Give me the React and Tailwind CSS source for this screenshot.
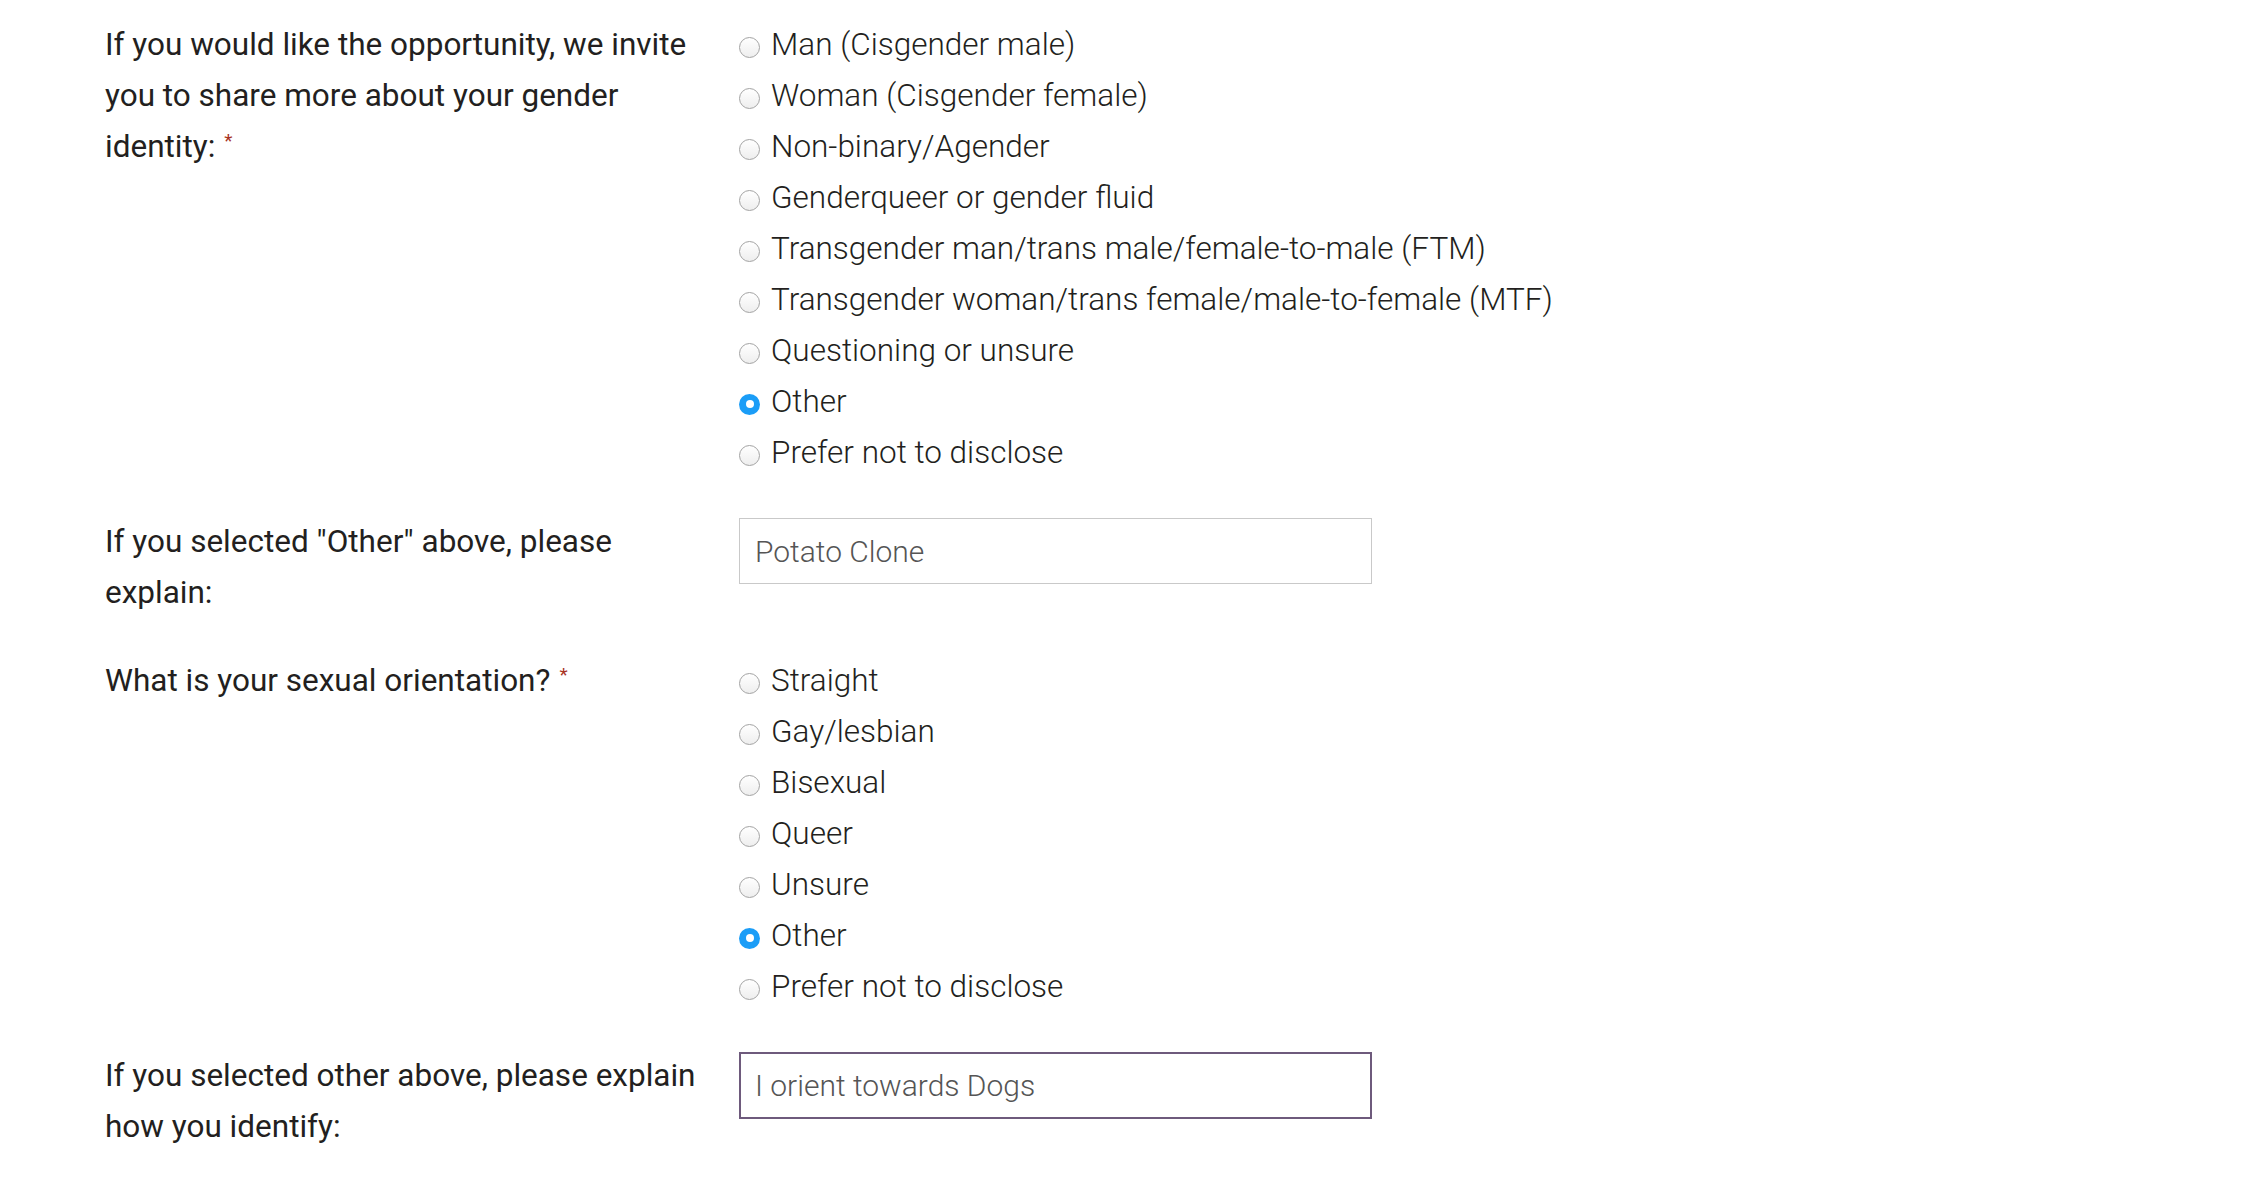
import { useState } from 'react';

const genderOptions = [
  'Man (Cisgender male)',
  'Woman (Cisgender female)',
  'Non-binary/Agender',
  'Genderqueer or gender fluid',
  'Transgender man/trans male/female-to-male (FTM)',
  'Transgender woman/trans female/male-to-female (MTF)',
  'Questioning or unsure',
  'Other',
  'Prefer not to disclose',
];

const orientationOptions = ['Straight', 'Gay/lesbian', 'Bisexual', 'Queer', 'Unsure', 'Other', 'Prefer not to disclose'];

function Required() {
  return <span className="ml-[9px] inline-block align-top text-[19px] leading-[40px] text-[#a8331f]">*</span>;
}

function Label({ children, required }) {
  return (
    <div className="pr-[20px] text-[31.5px] font-normal leading-[51px] text-[#231f20]">
      {children}
      {required && <Required />}
    </div>
  );
}

function RadioGroup({ options, value, onChange }) {
  return (
    <div className="flex flex-col">
      {options.map(opt => {
        const checked = opt === value;
        return (
          <label key={opt} onClick={() => onChange(opt)} className="flex h-[51px] cursor-pointer items-center gap-[11px]">
            {checked ? (
              <span className="mt-[5px] flex h-[21px] w-[21px] shrink-0 items-center justify-center rounded-full bg-[#1b9df7]">
                <span className="h-[8px] w-[8px] rounded-full bg-white" />
              </span>
            ) : (
              <span className="mt-[5px] h-[21px] w-[21px] shrink-0 rounded-full border border-[#a3a3a3] bg-gradient-to-b from-white to-[#eeeeee]" />
            )}
            <span className="text-[31.5px] font-light text-[#231f20]">{opt}</span>
          </label>
        );
      })}
    </div>
  );
}

export default function App() {
  const [gender, setGender] = useState('Other');
  const [orientation, setOrientation] = useState('Other');
  const [genderOther, setGenderOther] = useState('Potato Clone');
  const [orientOther, setOrientOther] = useState('I orient towards Dogs');

  return (
    <div className="min-h-screen bg-white pl-[105px] pt-[19px] font-['Roboto',sans-serif]">
      <div className="mb-[38px] grid grid-cols-[634px_1fr]">
        <Label required>If you would like the opportunity, we invite you to share more about your gender identity:</Label>
        <RadioGroup options={genderOptions} value={gender} onChange={setGender} />
      </div>

      <div className="mb-[37px] grid grid-cols-[634px_1fr]">
        <Label>If you selected "Other" above, please explain:</Label>
        <div>
          <input
            value={genderOther}
            onChange={e => setGenderOther(e.target.value)}
            className="mt-[2px] h-[66px] w-[633px] border border-[#c9c9c9] px-[15px] text-[30px] font-light text-[#555] outline-none"
          />
        </div>
      </div>

      <div className="mb-[38px] grid grid-cols-[634px_1fr]">
        <Label required>What is your sexual orientation?</Label>
        <RadioGroup options={orientationOptions} value={orientation} onChange={setOrientation} />
      </div>

      <div className="grid grid-cols-[634px_1fr]">
        <Label>If you selected other above, please explain how you identify:</Label>
        <div>
          <input
            value={orientOther}
            onChange={e => setOrientOther(e.target.value)}
            className="mt-[2px] h-[67px] w-[633px] border-2 border-[#6e5a7c] px-[14px] text-[30px] font-light text-[#555] outline-none"
          />
        </div>
      </div>
    </div>
  );
}
